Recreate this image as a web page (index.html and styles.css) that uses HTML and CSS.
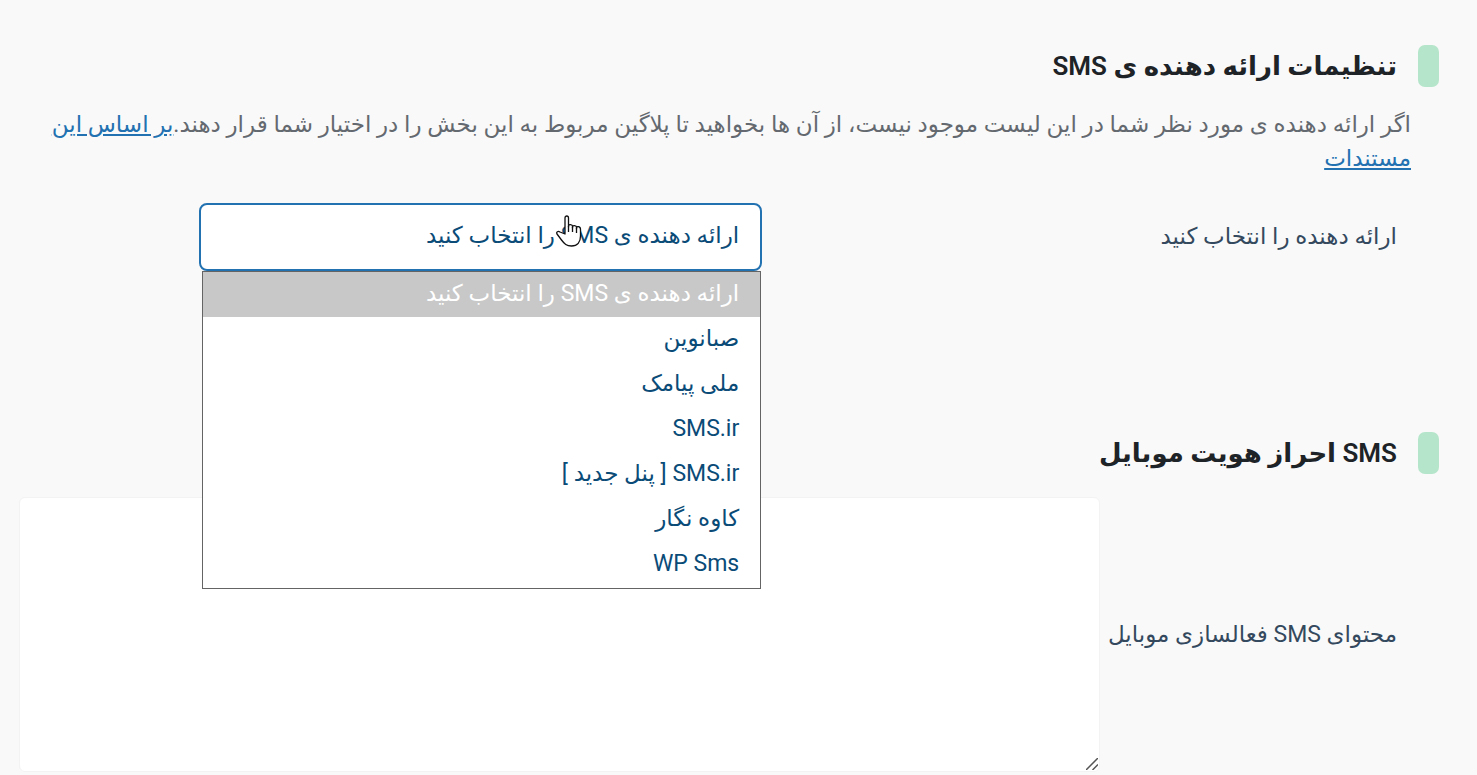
FILE: index.html
```
<!DOCTYPE html>
<html lang="fa" dir="rtl">
<head>
  <meta charset="UTF-8">
  <title>تنظیمات SMS</title>
  <link rel="stylesheet" href="styles.css">
</head>
<body>
  <main class="settings">
    <section>
      <h2 class="section-title">تنظیمات ارائه دهنده ی SMS</h2>
      <p class="description">اگر ارائه دهنده ی مورد نظر شما در این لیست موجود نیست، از آن ها بخواهید تا پلاگین مربوط به این بخش را در اختیار شما قرار دهند.<a href="#">بر اساس این مستندات</a></p>
      <div class="row provider-row">
        <label for="provider">ارائه دهنده را انتخاب کنید</label>
        <div class="select-wrap">
          <select id="provider" class="provider-select">
            <option>ارائه دهنده ی SMS را انتخاب کنید</option>
            <option>صبانوین</option>
            <option>ملی پیامک</option>
            <option>SMS.ir</option>
            <option>SMS.ir [ پنل جدید ]</option>
            <option>کاوه نگار</option>
            <option>WP Sms</option>
          </select>
          <ul class="options">
            <li class="active">ارائه دهنده ی SMS را انتخاب کنید</li>
            <li>صبانوین</li>
            <li>ملی پیامک</li>
            <li>SMS.ir</li>
            <li>SMS.ir [ پنل جدید ]</li>
            <li>کاوه نگار</li>
            <li>WP Sms</li>
          </ul>
          <svg class="pointer" viewBox="0 0 26 32" aria-hidden="true">
            <path d="M9 19V3C9 .3 12.500 .3 12.500 3V12v-1c0-2 4-2 4 .5V13v-1c0-2 4-2 4 .5V14v-1c0-2 4-2 4 1.500V21c0 6-3 10-9 10-5 0-7-2-10-6l-4.500-6c-1-2 1-3.500 3-2z"/>
            <path d="M12.500 11v6M16.500 12v5M20.500 13v5"/>
          </svg>
        </div>
      </div>
    </section>

    <section>
      <h2 class="section-title">SMS احراز هویت موبایل</h2>
      <div class="row message-row">
        <label for="message">محتوای SMS فعالسازی موبایل</label>
        <div class="message-wrap">
          <textarea id="message" class="message"></textarea>
          <svg class="grip" viewBox="0 0 12 12" aria-hidden="true">
            <path d="M0 12L12 0M6.500 12L12 6.500"/>
          </svg>
        </div>
      </div>
    </section>
  </main>
</body>
</html>
```
FILE: styles.css
```
* {
  box-sizing: border-box;
}

body {
  margin: 0;
  background: #f9f9f9;
  color: #34495e;
  font-family: Roboto, "DejaVu Sans", sans-serif;
  font-size: 23px;
}

.settings {
  padding: 45px 38px 0 19px;
}

.section-title {
  display: flex;
  align-items: center;
  gap: 21px;
  height: 42px;
  margin: 0;
  color: #1d2327;
  font-size: 26px;
  font-weight: 600;
  line-height: 38px;
}

.section-title::before {
  content: "";
  width: 21px;
  height: 42px;
  border-radius: 7px;
  background: #b5e5ca;
}

.description {
  margin: 21px 0 0;
  padding: 0 28px 0 16px;
  color: #646970;
  line-height: 34px;
}

.description a {
  color: #2271b1;
}

.row {
  display: grid;
  padding-right: 42px;
}

.provider-row {
  grid-template-columns: 33% 1fr;
  height: 256px;
  padding-top: 27px;
}

.provider-row label {
  padding-top: 17px;
  line-height: 34px;
}

.select-wrap {
  position: relative;
  width: 61%;
  margin: 0 auto;
}

.provider-select {
  display: block;
  width: 100%;
  height: 68px;
  padding: 0 21px 4px;
  appearance: none;
  border: 2px solid #2271b1;
  border-radius: 8px;
  outline: none;
  background: #fff;
  color: #0a4b78;
  font: inherit;
}

.options {
  position: absolute;
  top: 68px;
  left: 3px;
  right: 1px;
  z-index: 2;
  margin: 0;
  padding: 0 0 1px;
  border: 1px solid #646464;
  background: #fff;
  color: #0a4b78;
  list-style: none;
}

.options li {
  height: 45px;
  padding: 0 21px;
  line-height: 43px;
}

.options .active {
  background: #c8c8c8;
  color: #fff;
}

.pointer {
  position: absolute;
  top: 12px;
  left: 357px;
  z-index: 3;
  width: 26px;
  height: 32px;
  fill: #fff;
  stroke: #111;
  stroke-width: 1.300;
  stroke-linejoin: round;
}

.message-row {
  grid-template-columns: 297px 1fr;
  align-items: center;
  margin-top: 23px;
}

.message-wrap {
  position: relative;
}

.message {
  display: block;
  width: 100%;
  height: 275px;
  padding: 16px;
  border: 1px solid #f3f3f3;
  border-radius: 6px;
  outline: none;
  background: #fff;
  color: #34495e;
  font: inherit;
  resize: none;
}

.grip {
  position: absolute;
  right: 2px;
  bottom: 2px;
  width: 12px;
  height: 12px;
  stroke: #555;
  stroke-width: 1.500;
  pointer-events: none;
}
```
